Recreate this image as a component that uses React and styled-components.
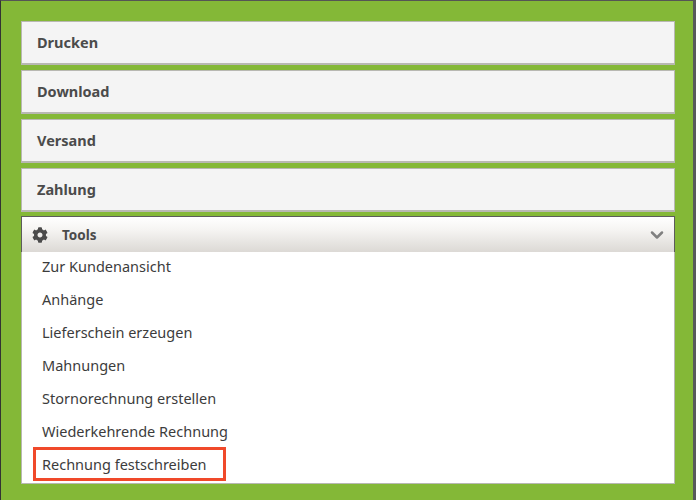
import React from 'react'
import styled, { createGlobalStyle } from 'styled-components'
import { ChevronDown } from 'lucide-react'
import { FaCog } from 'react-icons/fa'

const GlobalStyle = createGlobalStyle`
  html, body {
    margin: 0;
    padding: 0;
    background: #84b837;
  }
`

const Frame = styled.div`
  box-sizing: border-box;
  width: 696px;
  height: 500px;
  padding: 20px 18px 0 20px;
  background: #84b837;
  border-top: 1px solid #555;
  border-left: 1px solid #333;
  border-right: 3px solid #58595b;
  font-family: "Noto Sans", "Open Sans", sans-serif;
  display: flex;
  flex-direction: column;
  gap: 5px;
`

const Section = styled.div`
  box-sizing: border-box;
  height: 44px;
  padding: 0 0 2px 15px;
  display: flex;
  align-items: center;
  background: #f4f4f4;
  border: 1px solid #b8b8b2;
  border-bottom-width: 2px;
  color: #4b4b4b;
  font-size: 14.5px;
  font-weight: 700;
`

const Tools = styled.div`
  margin-top: -1px;
  display: flex;
  flex-direction: column;
  background: #fff;
  border: 1px solid #b8b8b2;
  border-top: 0;
`

const ToolsHeader = styled.div`
  box-sizing: border-box;
  height: 36px;
  margin: 0 -1px;
  padding: 0 7px 0 10px;
  display: flex;
  align-items: center;
  background: linear-gradient(#ffffff, #f6f5f3 35%, #dcd9d5);
  border-top: 1px solid #5c5c5c;
  border-left: 1px solid #5c5c5c;
  border-right: 1px solid #5c5c5c;
  color: #4b4b4b;
  font-size: 13.5px;
  font-weight: 700;
`

const ToolsTitle = styled.span`
  margin-left: 14px;
  flex: 1;
`

const Menu = styled.div`
  display: flex;
  flex-direction: column;
`

const MenuItem = styled.div`
  position: relative;
  box-sizing: border-box;
  height: 33px;
  padding: 0 0 6px 20px;
  display: flex;
  align-items: center;
  color: #3c3c3c;
  font-size: 14.5px;

  ${({ $marked }) => $marked && `
    &::after {
      content: "";
      position: absolute;
      left: 11px;
      top: -3px;
      width: 193px;
      height: 34px;
      box-sizing: border-box;
      border: 3px solid #f0492a;
    }
  `}
`

const sections = ['Drucken', 'Download', 'Versand', 'Zahlung']

const items = [
  'Zur Kundenansicht',
  'Anhänge',
  'Lieferschein erzeugen',
  'Mahnungen',
  'Stornorechnung erstellen',
  'Wiederkehrende Rechnung',
]

export default function App() {
  return (
    <Frame>
      <GlobalStyle />
      {sections.map((name) => (
        <Section key={name}>{name}</Section>
      ))}
      <Tools>
        <ToolsHeader>
          <FaCog size={16} color="#4b4b4b" />
          <ToolsTitle>Tools</ToolsTitle>
          <ChevronDown size={20} color="#808080" strokeWidth={3} />
        </ToolsHeader>
        <Menu>
          {items.map((item) => (
            <MenuItem key={item}>{item}</MenuItem>
          ))}
          <MenuItem $marked>Rechnung festschreiben</MenuItem>
        </Menu>
      </Tools>
    </Frame>
  )
}
